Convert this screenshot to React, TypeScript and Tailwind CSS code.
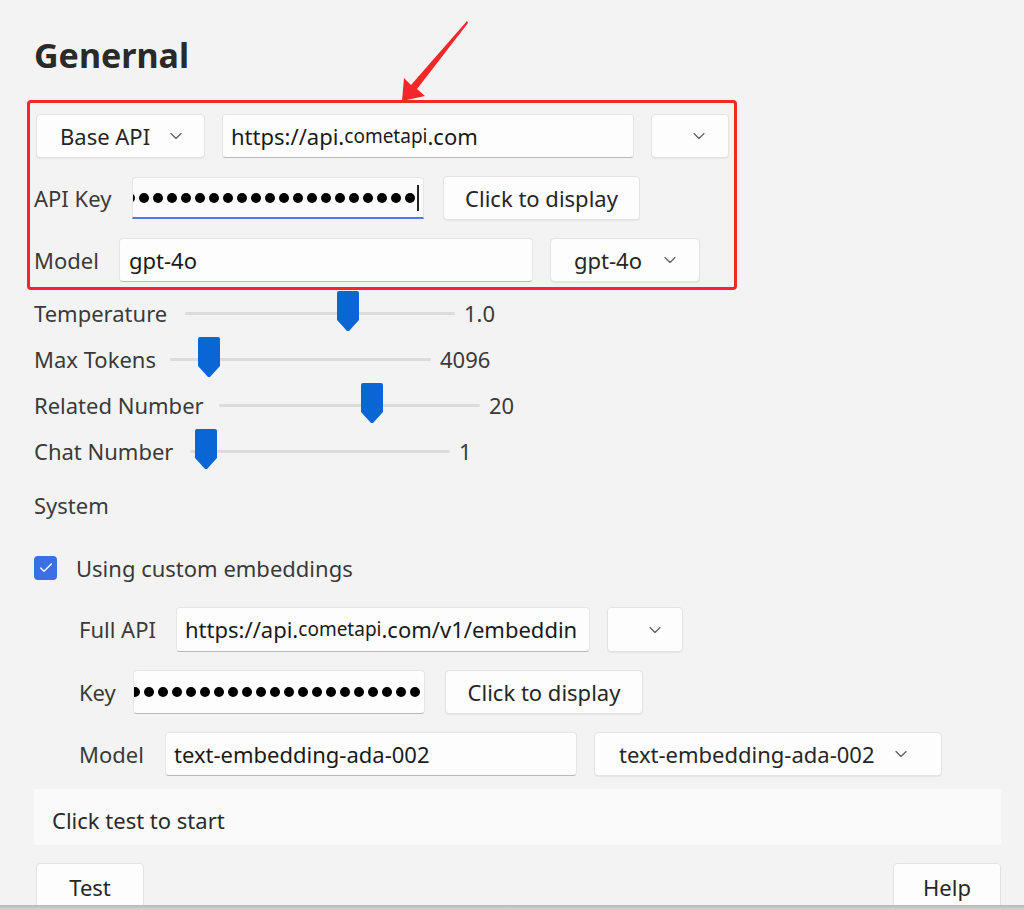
import { ChevronDown, Check } from "lucide-react";

const sliders = [
  { label: "Temperature", labelW: "w-[151px]", trackW: 270, pct: 0.605, value: "1.0" },
  { label: "Max Tokens", labelW: "w-[136px]", trackW: 261, pct: 0.15, value: "4096" },
  { label: "Related Number", labelW: "w-[185px]", trackW: 261, pct: 0.585, value: "20" },
  { label: "Chat Number", labelW: "w-[156px]", trackW: 260, pct: 0.062, value: "1" },
];

function Chevron() {
  return <ChevronDown size={20} strokeWidth={1.4} className="shrink-0 text-[#5c5c5c]" />;
}

function Dots({ focused }: { focused?: boolean }) {
  return (
    <div className="flex h-full items-center justify-end gap-[4px] overflow-hidden pr-[4px]">
      {Array.from({ length: 22 }).map((_, i) => (
        <span key={i} className="h-[10px] w-[10px] shrink-0 rounded-full bg-black" />
      ))}
      {focused && <span className="ml-[-2px] h-[26px] w-[2px] shrink-0 bg-[#222]" />}
    </div>
  );
}

function Slider({ trackW, pct }: { trackW: number; pct: number }) {
  return (
    <div className="relative h-[3px] rounded-full bg-[#dcdcdc]" style={{ width: trackW }}>
      <svg
        width="22"
        height="40"
        viewBox="0 0 22 40"
        className="absolute top-[-21px]"
        style={{ left: trackW * pct - 11 }}
      >
        <path d="M2 0 H20 Q22 0 22 2 V29 L12 40 H10 L0 29 V2 Q0 0 2 0 Z" fill="#0a66d4" />
      </svg>
    </div>
  );
}

export default function App() {
  const box = "rounded-[4px] border border-[#e3e3e3] bg-[#fdfdfd] shadow-[0_1px_1px_rgba(0,0,0,0.06)]";
  const input = "rounded-[4px] border border-[#e6e6e6] border-b-[#b9b9b9] bg-[#fdfdfd]";

  return (
    <div className="relative flex h-[910px] w-[1024px] flex-col overflow-hidden bg-[#f3f3f3] font-['Noto_Sans','DejaVu_Sans',sans-serif] text-[22px] text-[#262626]">
      <div className="flex-1 pl-[34px] pt-[35px]">
        <h1 className="text-[34px] font-bold leading-[40px] text-[#2a2a2a]">Genernal</h1>

        {/* highlighted connection block */}
        <div className="ml-[-7px] mt-[25px] w-[710px] rounded-[4px] border-[3px] border-[#f3262a] pb-[5px] pl-[4px] pt-[11px]">
          <div className="flex h-[44px] gap-[17px]">
            <div className={`${box} ml-[2px] flex w-[169px] items-center gap-[16px] pl-[23px]`}>
              <span>Base API</span>
              <Chevron />
            </div>
            <div className={`${input} flex w-[412px] items-center pl-[8px] text-[#1a1a1a]`}>
              https://api.<span className="text-[19px]">cometapi</span>.com
            </div>
            <div className={`${box} flex w-[78px] items-center justify-end pr-[19px]`}>
              <Chevron />
            </div>
          </div>

          <div className="mt-[18px] flex h-[44px] items-center">
            <span className="w-[98px] text-[#3a3a3a]">API Key</span>
            <div className="h-[42px] w-[292px] rounded-t-[4px] border border-[#e6e6e6] border-b-2 border-b-[#4a7fdc] bg-[#fbfbfb]">
              <Dots focused />
            </div>
            <div className={`${box} ml-[19px] flex h-[44px] w-[197px] items-center justify-center`}>Click to display</div>
          </div>

          <div className="mt-[18px] flex h-[44px] items-stretch">
            <span className="flex w-[85px] items-center text-[#3a3a3a]">Model</span>
            <div className={`${input} flex w-[414px] items-center pl-[9px] text-[#1a1a1a]`}>gpt-4o</div>
            <div className={`${box} ml-[17px] flex w-[150px] items-center gap-[18px] pl-[23px]`}>
              <span>gpt-4o</span>
              <Chevron />
            </div>
          </div>
        </div>

        {/* sliders */}
        <div className="flex flex-col">
          {sliders.map((s) => (
            <div key={s.label} className="flex h-[46px] items-center text-[#3a3a3a]">
              <span className={s.labelW}>{s.label}</span>
              <Slider trackW={s.trackW} pct={s.pct} />
              <span className="ml-[9px]">{s.value}</span>
            </div>
          ))}
        </div>

        <div className="mt-[16px] flex h-[30px] items-center text-[#3a3a3a]">System</div>

        <div className="mt-[33px] flex h-[30px] items-center gap-[19px]">
          <span className="flex h-[24px] w-[23px] items-center justify-center rounded-[4px] bg-[#3b6fe3]">
            <Check size={16} strokeWidth={2} className="text-white" />
          </span>
          <span className="text-[#3a3a3a]">Using custom embeddings</span>
        </div>

        {/* embeddings */}
        <div className="pl-[45px]">
          <div className="mt-[24px] flex h-[45px] items-stretch">
            <span className="flex w-[97px] items-center text-[#3a3a3a]">Full API</span>
            <div className={`${input} flex w-[414px] items-center overflow-hidden whitespace-nowrap pl-[8px] text-[#1a1a1a]`}>
              https://api.<span className="text-[19px]">cometapi</span>.com/v1/embeddin
            </div>
            <div className={`${box} ml-[17px] flex w-[76px] items-center justify-center pl-[20px]`}>
              <Chevron />
            </div>
          </div>

          <div className="mt-[18px] flex h-[44px] items-stretch">
            <span className="flex w-[54px] items-center text-[#3a3a3a]">Key</span>
            <div className={`${input} w-[292px]`}>
              <Dots />
            </div>
            <div className={`${box} ml-[20px] flex w-[198px] items-center justify-center`}>Click to display</div>
          </div>

          <div className="mt-[18px] flex h-[44px] items-stretch">
            <span className="flex w-[86px] items-center text-[#3a3a3a]">Model</span>
            <div className={`${input} flex w-[412px] items-center pl-[8px] text-[#1a1a1a]`}>text-embedding-ada-002</div>
            <div className={`${box} ml-[17px] flex w-[348px] items-center gap-[16px] pl-[24px]`}>
              <span>text-embedding-ada-002</span>
              <Chevron />
            </div>
          </div>
        </div>

        <div className="mt-[13px] flex h-[56px] w-[967px] items-center rounded-[3px] bg-[#fafafa] pl-[18px] pt-[6px] text-[#2a2a2a]">
          Click test to start
        </div>

        <div className="mt-[18px] flex h-[42px] w-[967px] justify-between overflow-hidden">
          <div className={`${box} ml-[2px] flex h-[48px] w-[108px] items-center justify-center`}>Test</div>
          <div className={`${box} flex h-[48px] w-[108px] items-center justify-center`}>Help</div>
        </div>
      </div>

      <div className="h-[5px] bg-gradient-to-b from-[#b8b8b8] to-[#d6d6d6]" />

      {/* annotation arrow */}
      <svg className="pointer-events-none absolute left-0 top-0" width="1024" height="120">
        <path d="M467 21 L468 23 L417 89 L425 96 L402 101 L404 78 L411 85 Z" fill="#f3262a" />
      </svg>
    </div>
  );
}
